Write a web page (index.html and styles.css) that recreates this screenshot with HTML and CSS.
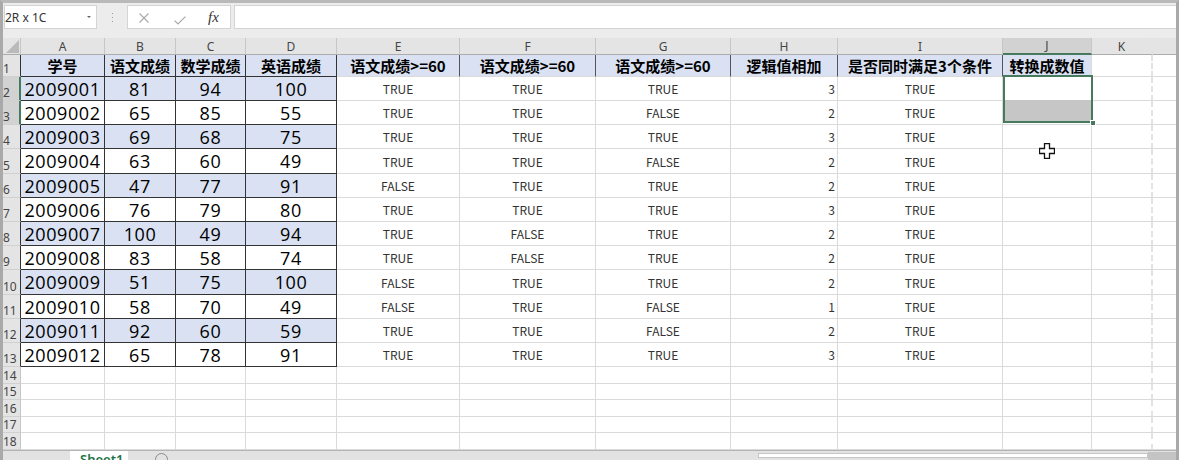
FILE: index.html
```html
<!DOCTYPE html>
<html lang="zh-CN">
<head>
    <meta charset="UTF-8">
    <title>Sheet1</title>
    <link rel="stylesheet" href="styles.css">
</head>
<body>
    <div class="app">
        <div class="formula-bar">
            <div class="name-box"><span>2R x 1C</span><i class="caret"></i></div>
            <div class="grip"><i></i><i></i><i></i></div>
            <div class="fx-box">
                <svg class="icon-x" width="10" height="10" viewBox="0 0 10 10"><path d="M0.5 0.5 L9.5 9.5 M9.5 0.5 L0.5 9.5" stroke="#a9a9a9" stroke-width="1.1" fill="none"/></svg>
                <svg class="icon-ok" width="12" height="9" viewBox="0 0 12 9"><path d="M0.6 4.6 L4 8 L11.4 0.6" stroke="#a9a9a9" stroke-width="1.2" fill="none"/></svg>
                <span class="fx">fx</span>
            </div>
            <div class="formula-input"></div>
        </div>

        <div class="sheet" id="sheet">
            <div class="selection"><div class="picked"></div></div>
            <div class="fill-handle"></div>
            <svg class="cursor" width="16" height="16" viewBox="0 0 16 16"><path d="M5.5 0.5 h5 v5 h5 v5 h-5 v5 h-5 v-5 h-5 v-5 h5 z" fill="#fff" stroke="#111" stroke-width="1.3"/></svg>
        </div>

        <div class="tabs">
            <div class="tab">Sheet1</div>
            <div class="add"></div>
            <div class="track"></div>
            <div class="track-end"></div>
        </div>
    </div>

    <script>
        const sheet = document.getElementById('sheet');

        const letters = ['A', 'B', 'C', 'D', 'E', 'F', 'G', 'H', 'I', 'J', 'K', ''];
        const heads = ['学号', '语文成绩', '数学成绩', '英语成绩', '语文成绩>=60', '语文成绩>=60',
            '语文成绩>=60', '逻辑值相加', '是否同时满足3个条件', '转换成数值'];

        const rows = [
            ['2009001', 81, 94, 100, 'TRUE', 'TRUE', 'TRUE', 3, 'TRUE'],
            ['2009002', 65, 85, 55, 'TRUE', 'TRUE', 'FALSE', 2, 'TRUE'],
            ['2009003', 69, 68, 75, 'TRUE', 'TRUE', 'TRUE', 3, 'TRUE'],
            ['2009004', 63, 60, 49, 'TRUE', 'TRUE', 'FALSE', 2, 'TRUE'],
            ['2009005', 47, 77, 91, 'FALSE', 'TRUE', 'TRUE', 2, 'TRUE'],
            ['2009006', 76, 79, 80, 'TRUE', 'TRUE', 'TRUE', 3, 'TRUE'],
            ['2009007', 100, 49, 94, 'TRUE', 'FALSE', 'TRUE', 2, 'TRUE'],
            ['2009008', 83, 58, 74, 'TRUE', 'FALSE', 'TRUE', 2, 'TRUE'],
            ['2009009', 51, 75, 100, 'FALSE', 'TRUE', 'TRUE', 2, 'TRUE'],
            ['2009010', 58, 70, 49, 'FALSE', 'TRUE', 'FALSE', 1, 'TRUE'],
            ['2009011', 92, 60, 59, 'TRUE', 'TRUE', 'FALSE', 2, 'TRUE'],
            ['2009012', 65, 78, 91, 'TRUE', 'TRUE', 'TRUE', 3, 'TRUE']
        ];

        function addCell(cls, text) {
            const div = document.createElement('div');
            div.className = 'cell ' + cls;
            if (text !== undefined) div.textContent = text;
            sheet.appendChild(div);
        }

        // K has the page-break line, the last column runs into the window edge
        function colClass(i) {
            if (i === 10) return 'brk';
            if (i === 11) return 'edge';
            return '';
        }

        // column letters
        addCell('corner');
        letters.forEach((l, i) => addCell('ch ' + (i === 9 ? 'on ' : '') + colClass(i), l));

        // row 1: table headings
        addCell('rh tbl', 1);
        for (let i = 0; i < 12; i++) {
            if (i < 4) addCell('hd tb', heads[i]);
            else if (i < 9) addCell('hd hb', heads[i]);
            else if (i === 9) addCell('hd', heads[i]);
            else addCell(colClass(i));
        }

        // rows 2-13
        rows.forEach((r, n) => {
            const num = n + 2;
            addCell('rh tbl' + (num < 4 ? ' on' : ''), num);
            for (let i = 0; i < 12; i++) {
                if (i < 4) addCell('big tb' + (num % 2 === 0 ? ' band' : ''), r[i]);
                else if (i === 7) addCell('sm num', r[i]);
                else if (i < 9) addCell('sm', r[i]);
                else addCell(colClass(i));
            }
        });

        // empty rows
        for (let num = 14; num <= 18; num++) {
            addCell('rh', num);
            for (let i = 0; i < 12; i++) addCell(colClass(i));
        }
    </script>
</body>
</html>
```

FILE: styles.css
```css
* {
    box-sizing: border-box;
}
body {
    margin: 0;
    background: #fff;
    font-family: "Noto Sans", "Noto Sans CJK SC", sans-serif;
}
.app {
    width: 1179px;
    height: 460px;
    overflow: hidden;
    border-top: 3px solid #b9b9b9;
    border-left: 3px solid #a9a9a9;
    border-right: 3px solid #a9a9a9;
    background: #ececec;
}

/* formula bar */
.formula-bar {
    display: flex;
    align-items: flex-start;
    height: 35px;
    padding: 2px 0 0 1px;
    background: #ececec;
}
.name-box {
    width: 93px;
    height: 24px;
    display: flex;
    align-items: center;
    justify-content: space-between;
    padding: 0 5px 0 0;
    background: #fff;
    border: 1px solid #d4d4d4;
    font-size: 12px;
    color: #333;
}
.caret {
    border-left: 2px solid transparent;
    border-right: 2px solid transparent;
    border-top: 2px solid #666;
}
.grip {
    width: 30px;
    height: 24px;
    display: flex;
    flex-direction: column;
    align-items: center;
    gap: 3px;
    padding-top: 8px;
}
.grip i {
    width: 1px;
    height: 1px;
    background: #9a9a9a;
}
.fx-box {
    width: 104px;
    height: 24px;
    display: flex;
    align-items: flex-start;
    padding-left: 11px;
    background: #fff;
    border: 1px solid #d4d4d4;
}
.icon-x {
    margin-top: 7px;
}
.icon-ok {
    margin: 10px 0 0 25px;
}
.fx {
    margin-left: 22px;
    font-family: "Liberation Serif", serif;
    font-style: italic;
    font-size: 15px;
    line-height: 22px;
    color: #333;
}
.formula-input {
    flex: 1;
    height: 24px;
    margin-left: 3px;
    background: #fff;
    border: 1px solid #d4d4d4;
    border-right: none;
}

/* grid */
.sheet {
    position: relative;
    display: grid;
    grid-template-columns: 18px 84px 71px 70px 91px 123px 136px 135px 107px 165px 89px 61px 23px;
    grid-template-rows: 17px 22px 24px 24px 24px 25px 24px 24px 24px 24px 25px 24px 24px 24px 17px 16px 17px 16px 17px;
    background: #fff;
    font-family: "Noto Sans CJK SC", sans-serif;
}
.cell {
    display: flex;
    align-items: center;
    justify-content: center;
    overflow: hidden;
    white-space: nowrap;
    border-right: 1px solid #dadada;
    border-bottom: 1px solid #dadada;
}
.corner {
    align-items: flex-end;
    justify-content: flex-end;
    padding: 0 1px 1px 0;
    background: #e4e4e4;
    border-right-color: #c6c6c6;
    border-bottom-color: #acacac;
}
.corner::after {
    content: "";
    border-left: 13px solid transparent;
    border-bottom: 13px solid #bababa;
}
.ch {
    background: #e4e4e4;
    border-right-color: #c6c6c6;
    border-bottom-color: #acacac;
    font-family: "Noto Sans", sans-serif;
    font-size: 12px;
    color: #444;
}
.ch.on {
    background: #d2d2d2;
    border-bottom: 2px solid #467a5e;
}
.rh {
    justify-content: flex-start;
    align-items: flex-end;
    padding-bottom: 1px;
    background: #e4e4e4;
    border-right-color: #c6c6c6;
    border-bottom-color: #d0d0d0;
    font-family: "Noto Sans", sans-serif;
    font-size: 12px;
    line-height: 12px;
    color: #444;
}
.rh.tbl {
    border-right-color: #333;
}
.rh.on {
    background: #d2d2d2;
    border-right: 2px solid #467a5e;
}
.hd {
    background: #d9e1f2;
    font-size: 15px;
    font-weight: 700;
    color: #000;
}
.hb {
    border-right-color: #555;
}
.tb {
    border-right-color: #333;
    border-bottom-color: #333;
}
.band {
    background: #d9e1f2;
}
.big {
    font-family: "Open Sans", sans-serif;
    font-size: 18px;
    letter-spacing: 0.6px;
    color: #000;
}
.sm {
    font-size: 12px;
    color: #333;
}
.num {
    justify-content: flex-end;
    padding-right: 2px;
}
.brk {
    border-right: 2px dashed #e2e2e2;
}
.edge {
    border-right: none;
}

/* selection J2:J3 */
.selection {
    position: absolute;
    left: 1000px;
    top: 37px;
    width: 90px;
    height: 48px;
    border: 2px solid #467a5e;
}
.picked {
    position: absolute;
    left: 0;
    right: 0;
    bottom: 0;
    height: 21px;
    background: #c6c6c6;
}
.fill-handle {
    position: absolute;
    left: 1087px;
    top: 82px;
    width: 6px;
    height: 6px;
    background: #467a5e;
    border: 1px solid #fff;
}
.cursor {
    position: absolute;
    left: 1036px;
    top: 105px;
}

/* sheet tabs */
.tabs {
    display: flex;
    align-items: flex-start;
    height: 10px;
    background: #e2e2e2;
    border-top: 1px solid #b4b4b4;
}
.tab {
    width: 58px;
    height: 9px;
    margin-left: 67px;
    padding: 2px 0 0 10px;
    background: #fff;
    font-size: 13px;
    font-weight: 600;
    line-height: 13px;
    color: #217346;
}
.add {
    width: 13px;
    height: 13px;
    margin: 2px 0 0 27px;
    border: 1px solid #8a8a8a;
    border-radius: 50%;
}
.track {
    width: 390px;
    height: 5px;
    margin: 2px 0 0 auto;
    background: #fff;
    border: 1px solid #c6c6c6;
}
.track-end {
    width: 28px;
    height: 8px;
    margin-top: 1px;
    background: #c4c4c4;
}
```
